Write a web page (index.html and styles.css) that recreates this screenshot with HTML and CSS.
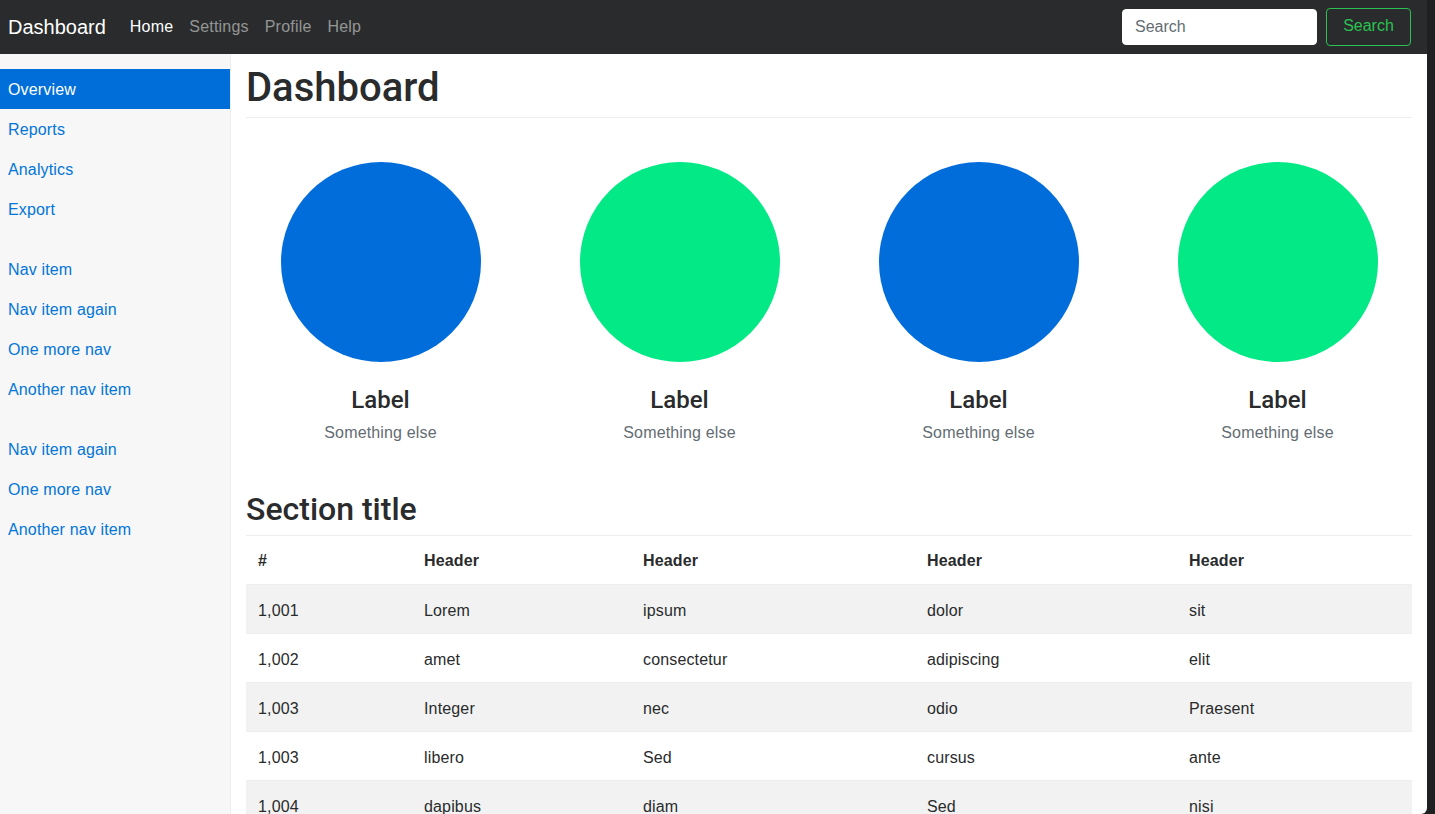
FILE: index.html
```html
<!DOCTYPE html>
<html lang="en">
<head>
<meta charset="utf-8">
<title>Dashboard</title>
<link rel="stylesheet" href="styles.css">
</head>
<body>
<div class="page">
  <nav class="navbar">
    <a class="brand" href="#">Dashboard</a>
    <ul class="topnav">
      <li><a class="toplink active" href="#">Home</a></li>
      <li><a class="toplink" href="#">Settings</a></li>
      <li><a class="toplink" href="#">Profile</a></li>
      <li><a class="toplink" href="#">Help</a></li>
    </ul>
    <form class="search">
      <input class="search-input" type="text" placeholder="Search">
      <button class="search-btn" type="button">Search</button>
    </form>
  </nav>
  <div class="body">
    <aside class="sidebar">
      <ul class="sidenav">
        <li><a class="sidelink active" href="#">Overview</a></li>
        <li><a class="sidelink" href="#">Reports</a></li>
        <li><a class="sidelink" href="#">Analytics</a></li>
        <li><a class="sidelink" href="#">Export</a></li>
      </ul>
      <ul class="sidenav">
        <li><a class="sidelink" href="#">Nav item</a></li>
        <li><a class="sidelink" href="#">Nav item again</a></li>
        <li><a class="sidelink" href="#">One more nav</a></li>
        <li><a class="sidelink" href="#">Another nav item</a></li>
      </ul>
      <ul class="sidenav">
        <li><a class="sidelink" href="#">Nav item again</a></li>
        <li><a class="sidelink" href="#">One more nav</a></li>
        <li><a class="sidelink" href="#">Another nav item</a></li>
      </ul>
    </aside>
    <main class="main">
      <h1 class="page-title">Dashboard</h1>
      <section class="placeholders">
        <div class="placeholder">
          <div class="circle blue"></div>
          <h4 class="ph-label">Label</h4>
          <span class="ph-muted">Something else</span>
        </div>
        <div class="placeholder">
          <div class="circle green"></div>
          <h4 class="ph-label">Label</h4>
          <span class="ph-muted">Something else</span>
        </div>
        <div class="placeholder">
          <div class="circle blue"></div>
          <h4 class="ph-label">Label</h4>
          <span class="ph-muted">Something else</span>
        </div>
        <div class="placeholder">
          <div class="circle green"></div>
          <h4 class="ph-label">Label</h4>
          <span class="ph-muted">Something else</span>
        </div>
      </section>
      <h2 class="section-title">Section title</h2>
      <table class="table">
        <thead>
          <tr>
            <th class="c1">#</th>
            <th class="c2">Header</th>
            <th class="c3">Header</th>
            <th class="c4">Header</th>
            <th class="c5">Header</th>
          </tr>
        </thead>
        <tbody>
          <tr><td>1,001</td><td>Lorem</td><td>ipsum</td><td>dolor</td><td>sit</td></tr>
          <tr><td>1,002</td><td>amet</td><td>consectetur</td><td>adipiscing</td><td>elit</td></tr>
          <tr><td>1,003</td><td>Integer</td><td>nec</td><td>odio</td><td>Praesent</td></tr>
          <tr><td>1,003</td><td>libero</td><td>Sed</td><td>cursus</td><td>ante</td></tr>
          <tr><td>1,004</td><td>dapibus</td><td>diam</td><td>Sed</td><td>nisi</td></tr>
        </tbody>
      </table>
    </main>
  </div>
</div>
</body>
</html>
```
FILE: styles.css
```css
* { box-sizing: border-box; }
html, body { margin: 0; padding: 0; }
body {
  background: #1f2021;
  font-family: "Liberation Sans", Arial, Helvetica, sans-serif;
  font-size: 16px;
  line-height: 24px;
  color: #292b2c;
  overflow: hidden;
  letter-spacing: 0.15px;
}
.page {
  width: 1427px;
  height: 814px;
  background: #fff;
  overflow: hidden;
  border-bottom-right-radius: 6px;
  display: flex;
  flex-direction: column;
}
a { text-decoration: none; }
ul { list-style: none; margin: 0; padding: 0; }

.navbar {
  height: 54px;
  flex: 0 0 54px;
  background: #292b2c;
  display: flex;
  align-items: center;
  padding: 0 16px 0 8px;
}
.brand {
  color: #fff;
  font-size: 20px;
  line-height: 30px;
  margin-right: 16px;
  letter-spacing: 0;
}
.topnav { display: flex; }
.toplink {
  display: block;
  padding: 8px;
  color: rgba(255,255,255,.5);
  letter-spacing: 0.2px;
}
.toplink.active { color: #fff; }
.search {
  margin-left: auto;
  display: flex;
  align-items: center;
}
.search-input {
  width: 195px;
  height: 36px;
  border: 1px solid #fff;
  border-radius: 4px;
  background: #fff;
  padding: 0 12px 1px;
  font-family: inherit;
  font-size: 16px;
  color: #464a4c;
  margin-right: 9px;
}
.search-input::placeholder { color: #636c72; }
.search-btn {
  width: 85px;
  height: 38px;
  background: transparent;
  border: 1px solid #2bc253;
  border-radius: 4px;
  color: #2bc253;
  font-family: inherit;
  font-size: 16px;
  padding: 0 12px 2px;
}

.body {
  flex: 1;
  display: flex;
  min-height: 0;
}
.sidebar {
  width: 231px;
  flex: 0 0 231px;
  background: #f7f7f7;
  border-right: 1px solid #eee;
  padding-top: 15px;
}
.sidenav { margin-bottom: 20px; }
.sidelink {
  display: block;
  padding: 9px 8px 7px;
  color: #0275d8;
}
.sidelink.active {
  background: #006ed9;
  color: #fff;
}

.main {
  flex: 1;
  padding: 10px 15px 0;
  min-width: 0;
}
.page-title {
  margin: 0 0 20px;
  font-family: Roboto, "Liberation Sans", sans-serif;
  font-size: 40px;
  line-height: 44px;
  font-weight: 500;
  letter-spacing: 0;
  padding: 2px 0 7px;
  border-bottom: 1px solid #eee;
}
.placeholders {
  margin: 0 -15px;
  padding-top: 24px;
  display: grid;
  grid-template-columns: repeat(4, 1fr);
  text-align: center;
}
.placeholder {
  display: flex;
  flex-direction: column;
  align-items: center;
}
.circle {
  width: 200px;
  height: 200px;
  border-radius: 50%;
}
.circle.blue { background: #016ddb; }
.circle.green { background: #02e986; }
.ph-label {
  margin: 25px 0 8px;
  font-family: Roboto, "Liberation Sans", sans-serif;
  font-size: 24px;
  line-height: 26px;
  font-weight: 500;
  letter-spacing: 0;
}
.ph-muted {
  color: #636c72;
}
.section-title {
  margin: 47px 0 8px;
  font-family: Roboto, "Liberation Sans", sans-serif;
  font-size: 32px;
  line-height: 35px;
  font-weight: 500;
  letter-spacing: 0;
}
.table {
  width: 100%;
  border-collapse: collapse;
  table-layout: fixed;
}
.table th, .table td {
  padding: 13px 12px 11px;
  text-align: left;
  vertical-align: top;
  border-top: 1px solid #eceeef;
}
.table td {
  padding: 14px 12px 10px;
}
.table th {
  font-weight: bold;
  border-bottom: 1px solid #eceeef;
}
.table tbody tr:nth-child(odd) { background: #f2f2f2; }
.c1 { width: 166px; }
.c2 { width: 219px; }
.c3 { width: 284px; }
.c4 { width: 262px; }
```
